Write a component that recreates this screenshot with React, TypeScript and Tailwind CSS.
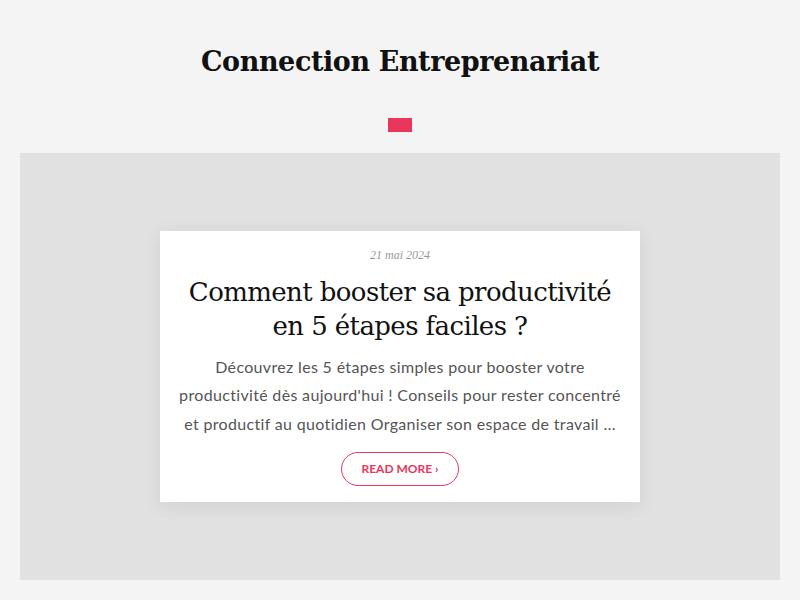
export default function App() {
  return (
    <div className="min-h-[600px] w-full bg-[#f4f4f4] px-5 pb-5">
      <h1 className="pt-[40px] text-center font-['DejaVu_Serif',serif] text-[27px] font-bold leading-[44px] tracking-[-0.4px] text-[#111]">
        Connection Entreprenariat
      </h1>
      <div className="mt-[34px] flex justify-center">
        <span className="block h-[14px] w-6 bg-[#e8375a]" />
      </div>
      <section className="mt-[21px] flex h-[427px] items-center justify-center bg-[#e1e1e1]">
        <article className="w-[480px] bg-white px-4 pb-4 pt-4 text-center shadow-[0_4px_18px_rgba(0,0,0,0.08)]">
          <p className="font-['Liberation_Serif',serif] text-[12px] italic leading-4 text-[#999]">21 mai 2024</p>
          <h2 className="mt-[12px] font-['DejaVu_Serif',serif] text-[26px] leading-[34px] tracking-[-0.6px] text-[#111]">
            Comment booster sa productivité
            <br />
            en 5 étapes faciles ?
          </h2>
          <p className="mt-[10px] font-['Lato',sans-serif] text-[16px] leading-[28.5px] tracking-[0.33px] text-[#555]">
            Découvrez les 5 étapes simples pour booster votre
            <br />
            productivité dès aujourd'hui ! Conseils pour rester concentré
            <br />
            et productif au quotidien Organiser son espace de travail …
          </p>
          <a
            href="#"
            className="mt-[14px] inline-flex h-[34px] w-[118px] items-center justify-center rounded-full border border-[#e8375a] font-['Lato',sans-serif] text-[12px] font-bold text-[#e8375a]"
          >
            READ MORE ›
          </a>
        </article>
      </section>
    </div>
  );
}
